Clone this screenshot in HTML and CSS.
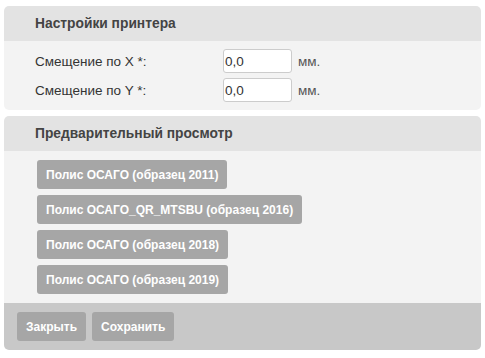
FILE: index.html
```html
<!DOCTYPE html>
<html lang="ru">
<head>
  <meta charset="UTF-8">
  <title>Настройки принтера</title>
  <link rel="stylesheet" href="styles.css">
</head>
<body>
  <div class="panel">
    <div class="panel-head">Настройки принтера</div>
    <div class="panel-body settings">
      <div class="row">
        <label for="offX">Смещение по X *:</label>
        <input type="text" id="offX" value="0,0">
        <span class="unit">мм.</span>
      </div>
      <div class="row">
        <label for="offY">Смещение по Y *:</label>
        <input type="text" id="offY" value="0,0">
        <span class="unit">мм.</span>
      </div>
    </div>
  </div>

  <div class="panel">
    <div class="panel-head">Предварительный просмотр</div>
    <div class="panel-body preview">
      <button class="btn">Полис ОСАГО (образец 2011)</button>
      <button class="btn">Полис ОСАГО_QR_MTSBU (образец 2016)</button>
      <button class="btn">Полис ОСАГО (образец 2018)</button>
      <button class="btn">Полис ОСАГО (образец 2019)</button>
    </div>
    <div class="panel-foot">
      <button class="btn">Закрыть</button>
      <button class="btn">Сохранить</button>
    </div>
  </div>
</body>
</html>
```

FILE: styles.css
```css
body { margin: 0; padding: 6px 4px; font-family: "Liberation Sans", Arial, sans-serif; font-size: 13.5px; color: #333; background: #fff; }
.panel { margin-bottom: 6px; border-radius: 5px; overflow: hidden; }
.panel-head { background: #e3e3e3; height: 35px; line-height: 35px; padding-left: 31px; font-size: 13.8px; font-weight: bold; color: #444; }
.panel-body { background: #f3f3f3; }
.settings { padding: 8px 0; display: flex; flex-direction: column; gap: 5px; }
.row { display: flex; align-items: center; height: 24px; padding-left: 31px; }
.row label { width: 188px; }
.row input { width: 69px; height: 24px; box-sizing: border-box; border: 1px solid #ccc; border-radius: 3px; padding: 0 1px; font: inherit; color: #333; background: #fff; }
.unit { margin-left: 6px; color: #555; }
.preview { padding: 9px 0 9px 33px; display: flex; flex-direction: column; align-items: flex-start; gap: 6px; }
.btn { height: 29px; padding: 0 9px; border: none; border-radius: 3px; background: #a6a6a6; color: #fff; font-family: "Liberation Sans", Arial, sans-serif; font-size: 12px; font-weight: bold; cursor: pointer; }
.panel-foot { background: #c8c8c8; padding: 9px 13px; display: flex; gap: 6px; }
```
